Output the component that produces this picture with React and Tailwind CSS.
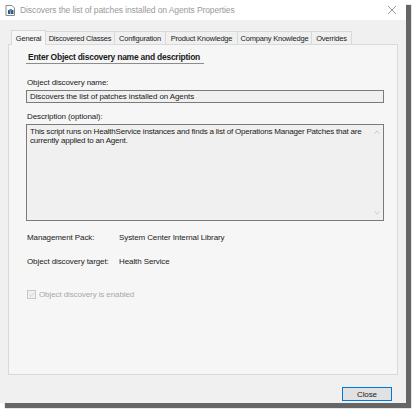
import { Check } from 'lucide-react'

const FONT = { fontFamily: '"Liberation Sans", Arial, sans-serif' }

const TABS = [
  { id: 'general', label: 'General', w: 'w-[35px]' },
  { id: 'classes', label: 'Discovered Classes', w: 'w-[69px]' },
  { id: 'config', label: 'Configuration', w: 'w-[51px]' },
  { id: 'product', label: 'Product Knowledge', w: 'w-[72px]' },
  { id: 'company', label: 'Company Knowledge', w: 'w-[74px]' },
  { id: 'overrides', label: 'Overrides', w: 'w-[40px]' },
]

function TitleIcon() {
  return (
    <svg width="11" height="11" viewBox="0 0 11 11" className="shrink-0">
      <path d="M1 0.5h6l2.5 2.5v7.5h-8.5z" fill="#fff" stroke="#8a8a8a" strokeWidth="1" />
      <rect x="3" y="5" width="2.5" height="4" fill="#2d5d8c" />
      <rect x="6" y="5" width="2.5" height="4" fill="#2d5d8c" />
      <rect x="4.5" y="4" width="2.5" height="2" fill="#5a8ac0" />
    </svg>
  )
}

function Field({ children, className = '' }) {
  return (
    <div className={`border border-[#7a7a7a] bg-[#f0f0f0] ${className}`}>
      {children}
    </div>
  )
}

export default function App() {
  return (
    <div className="w-[412px] h-[409px] bg-white text-[8px] leading-[9px] text-[#1a1a1a] tracking-[-0.1px]" style={FONT}>
      <div className="w-[406px] h-[403px] flex flex-col bg-[#f0f0f0] shadow-[5px_5px_1px_rgba(0,0,0,0.6)]">
        {/* title bar */}
        <div className="h-[20px] bg-white flex items-center pl-[5px] pr-[9px] gap-[4px]">
          <TitleIcon />
          <span className="text-[8.5px] text-[#9a9a9a] flex-1 truncate">
            Discovers the list of patches installed on Agents Properties
          </span>
          <svg width="10" height="10" viewBox="0 0 10 10">
            <path d="M1 1l8 8M9 1l-8 8" stroke="#8a8a8a" strokeWidth="0.9" />
          </svg>
        </div>

        {/* client area */}
        <div className="flex-1 flex flex-col px-[8px] pt-[9px]">
          <div className="flex items-end h-[15px] pl-[3px]">
            {TABS.map((t) =>
              t.id === 'general' ? (
                <div
                  key={t.id}
                  className={`${t.w} h-[15px] -mb-px z-10 border border-b-0 border-[#d9d9d9] bg-[#f6f6f6] flex items-center justify-center text-[7.5px] tracking-[-0.2px]`}
                >
                  {t.label}
                </div>
              ) : (
                <div
                  key={t.id}
                  className={`${t.w} h-[13px] border border-b-0 border-l-0 border-[#d9d9d9] bg-[#f0f0f0] flex items-center justify-center text-[7.5px] tracking-[-0.2px] whitespace-nowrap`}
                >
                  {t.label}
                </div>
              )
            )}
          </div>

          <div className="h-[331px] w-[390px] border border-[#d9d9d9] bg-[#f6f6f6] px-[17px] pt-[8px] flex flex-col">
            <div className="flex">
              <div className="border-b border-[#8c8c8c] pb-[1px] pl-[2px] pr-[4px]">
                <span className="font-bold text-[8.5px] tracking-[-0.25px]">
                  Enter Object discovery name and description
                </span>
              </div>
            </div>

            <div className="mt-[14px] pl-[1px]">Object discovery name:</div>
            <Field className="mt-[3px] h-[13px] w-[358px] flex items-center px-[3px]">
              Discovers the list of patches installed on Agents
            </Field>

            <div className="mt-[9px] pl-[1px]">Description (optional):</div>
            <Field className="mt-[3px] h-[97px] w-[358px] flex">
              <div className="flex-1 px-[3px] pt-[3px] leading-[8.5px] tracking-[-0.2px]">
                This script runs on HealthService instances and finds a list of Operations Manager Patches that are
                currently applied to an Agent.
              </div>
              <div className="w-[12px] flex flex-col justify-between items-center py-[5px]">
                <svg width="6" height="4" viewBox="0 0 6 4">
                  <path d="M0.5 3.5L3 1l2.5 2.5" fill="none" stroke="#c4c4c4" strokeWidth="0.9" />
                </svg>
                <svg width="6" height="4" viewBox="0 0 6 4">
                  <path d="M0.5 0.5L3 3l2.5-2.5" fill="none" stroke="#c4c4c4" strokeWidth="0.9" />
                </svg>
              </div>
            </Field>

            <div className="mt-[12px] flex pl-[1px]">
              <span className="w-[92px]">Management Pack:</span>
              <span>System Center Internal Library</span>
            </div>
            <div className="mt-[15px] flex pl-[1px]">
              <span className="w-[92px]">Object discovery target:</span>
              <span>Health Service</span>
            </div>

            <div className="mt-[24px] flex items-center gap-[3px] pl-[1px] text-[#a8a8a8]">
              <span className="w-[9px] h-[9px] border border-[#c8c8c8] bg-[#f0f0f0] flex items-center justify-center">
                <Check size={8} strokeWidth={1.5} className="text-[#b0b0b0]" />
              </span>
              <span>Object discovery is enabled</span>
            </div>
          </div>

          <div className="flex justify-end pr-[6px] mt-[12px]">
            <button
              type="button"
              className="w-[50px] h-[14px] border border-[#0078d7] bg-[#e1e1e1] text-[8px] flex items-center justify-center"
            >
              Close
            </button>
          </div>
        </div>
      </div>
    </div>
  )
}
